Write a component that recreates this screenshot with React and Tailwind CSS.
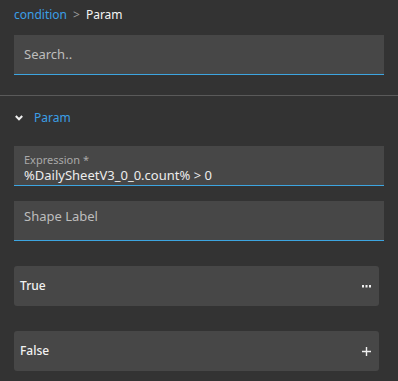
import React from "react";

const font = { fontFamily: '"Noto Sans", "Open Sans", sans-serif' };

const Field = ({ label, value }) => (
  <div className="h-10 bg-[#474747] border-b border-[#3da5e0] px-[10px] flex flex-col">
    {value ? (
      <>
        <span className="mt-[8px] text-[11px] leading-[12px] text-[#a9a9a9]">{label}</span>
        <span className="mt-[1px] text-[13px] leading-[16px] text-[#ececec]">{value}</span>
      </>
    ) : (
      <span className="mt-[7px] text-[13px] leading-[17px] text-[#bdbdbd]">{label}</span>
    )}
  </div>
);

const Branch = ({ title, icon }) => (
  <div className="h-10 mr-[5px] rounded-[3px] bg-[#474747] flex items-center justify-between pl-[6px] pr-[8px]">
    <span className="text-[12px] font-medium text-[#f2f2f2]">{title}</span>
    {icon}
  </div>
);

export default function App() {
  return (
    <div className="w-[398px] h-[381px] bg-[#333333] overflow-hidden" style={font}>
      {/* breadcrumb */}
      <div className="px-[14px] pt-[7px] h-[35px] text-[12px] leading-4 flex gap-[6px]">
        <span className="text-[#3b9fe6]">condition</span>
        <span className="text-[#9a9a9a]">&gt;</span>
        <span className="text-[#f5f5f5]">Param</span>
      </div>

      <div className="px-[14px]">
        <div className="h-10 bg-[#474747] border-b border-[#3da5e0] px-[10px] flex items-center">
          <span className="text-[13px] text-[#bdbdbd]">Search..</span>
        </div>
      </div>

      <div className="h-px bg-[#5a5a5a] mt-[20px]" />

      <div className="h-[44px] px-[15px] flex items-center gap-[11px]">
        <svg width="8" height="6" viewBox="0 0 8 6" fill="none" stroke="#f0f0f0" strokeWidth="2">
          <path d="M0.8 1 L4 4.3 L7.2 1" />
        </svg>
        <span className="text-[12px] text-[#3b9fe6]">Param</span>
      </div>

      <div className="px-[14px] mt-[6px] flex flex-col gap-[15px]">
        <Field label="Expression *" value="%DailySheetV3_0_0.count% > 0" />
        <Field label="Shape Label" />
      </div>

      <div className="px-[14px] mt-[25px] flex flex-col gap-[25px]">
        <Branch
          title="True"
          icon={
            <svg width="9" height="3" viewBox="0 0 9 3" fill="#f0f0f0">
              <rect x="0" y="0" width="2" height="2.5" />
              <rect x="3.5" y="0" width="2" height="2.5" />
              <rect x="7" y="0" width="2" height="2.5" />
            </svg>
          }
        />
        <Branch
          title="False"
          icon={
            <svg width="9" height="9" viewBox="0 0 9 9" stroke="#f0f0f0" strokeWidth="1.4">
              <path d="M4.5 0 V9 M0 4.5 H9" />
            </svg>
          }
        />
      </div>
    </div>
  );
}
